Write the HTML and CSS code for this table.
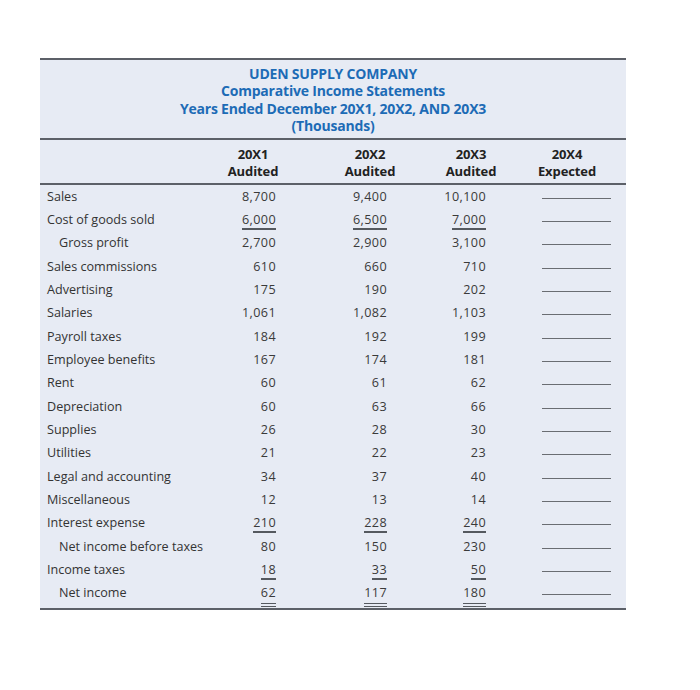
FILE: index.html
```html
<!DOCTYPE html>
<html>
<head>
<meta charset="utf-8">
<link rel="stylesheet" href="styles.css">
</head>
<body>
<div class="sheet">
  <div class="title">
    <div>UDEN SUPPLY COMPANY</div>
    <div>Comparative Income Statements</div>
    <div>Years Ended December 20X1, 20X2, AND 20X3</div>
    <div>(Thousands)</div>
  </div>
  <div class="heads">
    <div></div>
    <div class="head">20X1<br>Audited</div>
    <div class="head">20X2<br>Audited</div>
    <div class="head">20X3<br>Audited</div>
    <div class="head">20X4<br>Expected</div>
  </div>
  <div class="rows">
    <div class="row"><div class="lbl">Sales</div><div class="num">8,700</div><div class="num">9,400</div><div class="num">10,100</div><div class="blank"></div></div>
    <div class="row"><div class="lbl">Cost of goods sold</div><div class="num"><span class="ul">6,000</span></div><div class="num"><span class="ul">6,500</span></div><div class="num"><span class="ul">7,000</span></div><div class="blank"></div></div>
    <div class="row"><div class="lbl ind">Gross profit</div><div class="num">2,700</div><div class="num">2,900</div><div class="num">3,100</div><div class="blank"></div></div>
    <div class="row"><div class="lbl">Sales commissions</div><div class="num">610</div><div class="num">660</div><div class="num">710</div><div class="blank"></div></div>
    <div class="row"><div class="lbl">Advertising</div><div class="num">175</div><div class="num">190</div><div class="num">202</div><div class="blank"></div></div>
    <div class="row"><div class="lbl">Salaries</div><div class="num">1,061</div><div class="num">1,082</div><div class="num">1,103</div><div class="blank"></div></div>
    <div class="row"><div class="lbl">Payroll taxes</div><div class="num">184</div><div class="num">192</div><div class="num">199</div><div class="blank"></div></div>
    <div class="row"><div class="lbl">Employee benefits</div><div class="num">167</div><div class="num">174</div><div class="num">181</div><div class="blank"></div></div>
    <div class="row"><div class="lbl">Rent</div><div class="num">60</div><div class="num">61</div><div class="num">62</div><div class="blank"></div></div>
    <div class="row"><div class="lbl">Depreciation</div><div class="num">60</div><div class="num">63</div><div class="num">66</div><div class="blank"></div></div>
    <div class="row"><div class="lbl">Supplies</div><div class="num">26</div><div class="num">28</div><div class="num">30</div><div class="blank"></div></div>
    <div class="row"><div class="lbl">Utilities</div><div class="num">21</div><div class="num">22</div><div class="num">23</div><div class="blank"></div></div>
    <div class="row"><div class="lbl">Legal and accounting</div><div class="num">34</div><div class="num">37</div><div class="num">40</div><div class="blank"></div></div>
    <div class="row"><div class="lbl">Miscellaneous</div><div class="num">12</div><div class="num">13</div><div class="num">14</div><div class="blank"></div></div>
    <div class="row"><div class="lbl">Interest expense</div><div class="num"><span class="ul">210</span></div><div class="num"><span class="ul">228</span></div><div class="num"><span class="ul">240</span></div><div class="blank"></div></div>
    <div class="row"><div class="lbl ind">Net income before taxes</div><div class="num">80</div><div class="num">150</div><div class="num">230</div><div class="blank"></div></div>
    <div class="row"><div class="lbl">Income taxes</div><div class="num"><span class="ul">18</span></div><div class="num"><span class="ul">33</span></div><div class="num"><span class="ul">50</span></div><div class="blank"></div></div>
    <div class="row"><div class="lbl ind">Net income</div><div class="num"><span class="dul">62</span></div><div class="num"><span class="dul">117</span></div><div class="num"><span class="dul">180</span></div><div class="blank"></div></div>
  </div>
</div>
</body>
</html>
```

FILE: styles.css
```css
html, body {
  margin: 0;
  padding: 0;
  background: #ffffff;
}

body {
  font-family: "Open Sans", "Liberation Sans", sans-serif;
  color: #333333;
}

.sheet {
  margin: 58px 0 0 40px;
  width: 586px;
  background: #e7ebf4;
  border-top: 2px solid #5c6068;
  border-bottom: 2px solid #5c6068;
}

.title {
  padding: 5px 0 3px;
  text-align: center;
  color: #1d6bb6;
  font-weight: 700;
  font-size: 14px;
  line-height: 17.4px;
  letter-spacing: -0.2px;
}

.heads {
  display: grid;
  grid-template-columns: 160px 106px 128px 74px 118px;
  border-top: 2px solid #5c6068;
  border-bottom: 2px solid #5c6068;
  padding: 6px 0 3px;
}

.head {
  text-align: center;
  font-weight: 700;
  font-size: 13px;
  line-height: 17px;
  color: #222222;
  letter-spacing: -0.1px;
}

.rows {
  padding: 0 0 3px;
}

.row {
  display: grid;
  grid-template-columns: 156px 80px 111px 99px 140px;
  height: 23.35px;
  line-height: 23.35px;
  font-size: 12.6px;
  font-weight: 500;
}

.lbl {
  padding-left: 7px;
  white-space: nowrap;
}

.lbl.ind {
  padding-left: 19px;
}

.num {
  text-align: right;
  color: #3a3a3a;
  letter-spacing: 0.4px;
}

.ul {
  border-bottom: 2px solid #55595f;
  padding-bottom: 0;
}

.dul {
  border-bottom: 4px double #55595f;
  padding-bottom: 2px;
}

.blank {
  margin: 0 0 0 56px;
  width: 69px;
  height: 13px;
  border-bottom: 1.5px solid #6a6d72;
}
```
